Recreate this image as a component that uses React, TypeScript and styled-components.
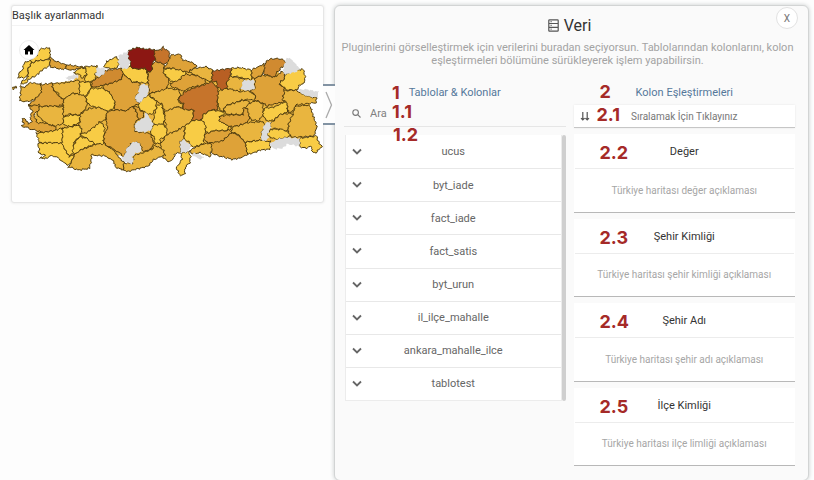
import React from "react";
import styled, { createGlobalStyle } from "styled-components";

const GlobalStyle = createGlobalStyle`
  * { box-sizing: border-box; }
  body {
    margin: 0;
    background: #fdfdfd;
    font-family: Roboto, "Liberation Sans", sans-serif;
    color: #333;
  }
  button, input { font: inherit; color: inherit; }
`;

const Page = styled.main`
  display: grid;
  grid-template-columns: 313fr 475fr;
  gap: 10px;
  align-items: start;
  padding: 5px 5px 1px 11px;
`;

const MapCard = styled.section`
  background: #fff;
  border: 1px solid #e6e6e6;
  border-radius: 3px;
  box-shadow: 0 0 3px #e4e4e4;
`;

const MapTitle = styled.h2`
  margin: 0;
  height: 20px;
  line-height: 20px;
  font-size: 11px;
  font-weight: 400;
  color: #333;
  border-bottom: 1px solid #f3f3f3;
`;

const MapArea = styled.div`
  position: relative;
  svg.map { display: block; width: 100%; height: auto; }
`;

const HomeButton = styled.button`
  position: absolute;
  left: 7px;
  top: 14px;
  width: 20px;
  height: 20px;
  padding: 0;
  display: grid;
  place-items: center;
  border: 1px solid #eee;
  border-radius: 50%;
  background: #fff;
`;

const Panel = styled.section`
  position: relative;
  padding: 10px 13px 14px 9px;
  background: #fafafa;
  border: 1px solid #d2d4d4;
  border-radius: 6px;
  box-shadow: 0 0 4px #c8cccc;
`;

const Handle = styled.button`
  position: absolute;
  left: -12px;
  top: 78px;
  width: 12px;
  height: 41px;
  padding: 0;
  display: grid;
  place-items: center;
  background: #fdfdfd;
  border: 0;
  border-top: 2px solid #8293a3;
  border-bottom: 2px solid #8293a3;
`;

const CloseButton = styled.button`
  position: absolute;
  right: 10px;
  top: 1px;
  width: 22px;
  height: 22px;
  padding: 0;
  border: 1px solid #e2e2e2;
  border-radius: 50%;
  background: #fff;
  font-size: 10px;
  color: #777;
`;

const PanelTitle = styled.h1`
  display: flex;
  justify-content: center;
  align-items: center;
  gap: 5px;
  margin: 0;
  height: 18px;
  font-size: 16px;
  font-weight: 400;
  color: #333;
`;

const Intro = styled.p`
  margin: 7px -8px 17px;
  padding: 0 8px 0 4px;
  font-size: 11px;
  line-height: 13px;
  text-align: center;
  color: #a3a3a3;
`;

const Columns = styled.div`
  display: grid;
  grid-template-columns: 1fr 1fr;
  gap: 8px;
  align-items: start;
`;

const Column = styled.div`
  position: relative;
`;

const ColumnTitle = styled.h2`
  margin: 0;
  height: 17px;
  line-height: 18px;
  font-size: 11px;
  font-weight: 400;
  text-align: center;
  color: #55789a;
`;

const Mark = styled.span<{ $x: number; $y: number }>`
  position: absolute;
  left: ${(p) => p.$x}px;
  top: ${(p) => p.$y}px;
  font-family: Inter, Roboto, sans-serif;
  font-size: 18px;
  line-height: 18px;
  font-weight: 700;
  color: #a52a28;
  pointer-events: none;
`;

const Search = styled.label`
  display: flex;
  align-items: center;
  gap: 9px;
  height: 26px;
  padding: 0 8px 0;
  border-bottom: 1px solid #e6e6e6;
`;

const SearchInput = styled.input`
  flex: 1;
  min-width: 0;
  padding: 0;
  border: 0;
  outline: 0;
  background: transparent;
  font-size: 11px;
  &::placeholder { color: #808080; opacity: 1; }
`;

const TableArea = styled.div`
  display: flex;
  margin-top: 8px;
  padding-left: 1px;
`;

const TableList = styled.ul`
  flex: 1;
  display: grid;
  grid-auto-rows: 1fr;
  min-height: 266px;
  margin: 0;
  padding: 0;
  list-style: none;
  background: #fff;
  border: 1px solid #ececec;
  border-top: 0;
`;

const TableItem = styled.li`
  display: grid;
  & + & { border-top: 1px solid #e8e8e8; }
`;

const TableButton = styled.button`
  display: grid;
  grid-template-columns: 16px 1fr 16px;
  align-items: center;
  padding: 0 3px;
  border: 0;
  background: transparent;
  font-size: 11px;
  color: #666;
`;

const ScrollThumb = styled.div`
  width: 4px;
  border-radius: 2px;
  background: #cfcfcf;
`;

const SortButton = styled.button`
  display: grid;
  grid-template-columns: 10px 1fr 10px;
  align-items: center;
  width: 100%;
  height: 23px;
  margin-top: 4px;
  padding: 0 6px;
  border: 0;
  border-bottom: 1px solid #c6c6c6;
  background: #fff;
  box-shadow: 0 0 2px #e6e6e6;
  font-size: 10px;
  color: #777;
`;

const DropList = styled.div`
  display: grid;
  grid-auto-rows: 1fr;
  gap: 6px;
  min-height: 332px;
  margin-top: 6px;
`;

const DropCard = styled.section`
  position: relative;
  display: flex;
  flex-direction: column;
  padding: 0 1px;
  background: #fff;
  border-bottom: 1px solid #b8b8b8;
`;

const DropTitle = styled.h3`
  margin: 0;
  height: 35px;
  line-height: 36px;
  font-size: 11px;
  font-weight: 400;
  text-align: center;
  color: #333;
  border-bottom: 1px solid #ececec;
`;

const DropHint = styled.p`
  flex: 1;
  display: grid;
  place-items: center;
  margin: 0;
  font-size: 10px;
  color: #a6a6a6;
`;

const Y = "#f8cc45";
const A = "#e9b53f";
const O = "#dea238";

const land =
  "240,210 290,210 312,250 365,210 400,190 460,190 500,200 590,220 640,240 700,230 780,230 830,210 870,260 895,275 930,300 930,400 900,420 800,430 740,455 660,465 620,445 570,440 550,445 500,460 460,450 400,480 340,460 240,470 200,470 125,435 115,405 100,370 110,330 110,300 120,255 220,242";

const provinces: [string, string][] = [
  [Y, "118,147 150,143 150,172 140,180 112,182 95,190 90,182 110,165"],
  [Y, "72,188 90,182 95,190 85,205 82,228 70,234 54,232 56,222 68,208"],
  [Y, "95,190 112,182 140,180 152,176 148,196 128,210 105,228 88,238 74,252 62,250 84,230 85,205"],
  [O, "150,172 170,185 200,195 200,206 185,208 150,200"],
  [O, "198,194 255,202 240,205 215,210 198,208"],
  [Y, "218,220 240,205 258,204 260,225 245,235 236,222"],
  [Y, "256,200 290,198 294,212 285,222 288,240 262,247 252,240 260,225"],
  [Y, "312,200 320,185 338,177 350,170 356,180 356,200 345,206 328,205"],
  ["#d08a30", "275,245 300,230 318,212 362,205 372,222 360,240 335,250 310,255 285,262 275,258"],
  [Y, "362,205 390,200 410,208 436,204 442,218 445,250 425,248 395,245 370,222"],
  [O, "456,212 456,190 470,185 492,192 492,222 508,242 500,262 505,270 470,275 448,280 445,250 444,218"],
  ["#8c1713", "384,152 410,143 440,147 466,150 470,175 456,190 456,212 442,218 436,204 410,208 390,200 393,185 384,172"],
  ["#c6742b", "462,160 465,150 485,150 488,138 494,150 508,152 508,172 514,186 495,192 480,188 468,185"],
  [O, "510,172 515,165 542,163 548,180 570,185 590,195 585,205 565,215 540,215 520,205 492,205 500,192"],
  [Y, "490,207 520,205 557,216 556,230 540,240 528,250 510,240 492,222"],
  [A, "565,215 585,205 620,200 638,212 635,245 615,240 595,228"],
  [O, "510,250 540,238 555,222 595,228 618,240 610,255 570,262 550,275 535,265 515,262"],
  [Y, "694,205 720,203 755,210 755,240 735,235 710,230 692,230"],
  [A, "683,230 692,228 732,238 730,255 718,275 695,272 678,265"],
  ["#b85f23", "638,213 694,205 690,230 680,250 683,265 668,270 652,262 650,245 635,243"],
  [O, "755,210 790,192 798,205 785,225 765,235 755,235"],
  [O, "765,235 785,225 810,228 822,232 845,215 855,225 850,240 838,252 850,262 855,275 848,290 852,305 825,312 800,318 780,305 765,302 765,285 750,272 764,268"],
  ["#d08a30", "794,190 810,177 835,176 855,180 858,195 840,205 830,220 822,232 810,228 792,222"],
  [Y, "855,225 880,212 910,208 916,235 910,252 900,255 890,270 865,270 850,262 838,250 850,240"],
  [A, "853,272 890,270 905,282 930,290 950,294 948,308 915,312 888,315 880,330 866,340 860,310 848,300"],
  [A, "446,282 470,275 505,264 535,270 542,285 532,300 550,315 548,325 530,320 496,340 485,312 470,305"],
  [A, "495,335 530,320 550,325 582,332 577,360 555,380 530,392 502,408 495,395 500,375 490,362"],
  [A, "652,275 680,265 720,275 745,272 765,285 765,302 745,298 725,300 705,308 680,315 670,335 658,325 652,300"],
  [A, "675,318 705,308 730,300 750,305 745,320 730,330 730,345 705,343 680,342 670,332"],
  [A, "748,310 765,302 788,310 790,345 775,362 755,360 742,340 730,330"],
  ["#c6742b", "542,290 550,278 580,265 610,256 635,246 652,262 655,275 652,300 652,328 630,330 610,345 608,358 592,362 577,360 582,330 550,328 550,312 535,300"],
  [Y, "792,325 820,322 850,307 862,310 862,335 840,345 820,362 798,362 788,345"],
  [A, "810,370 825,358 842,342 875,340 882,345 866,370 865,395 850,392 830,385 810,388"],
  [A, "885,320 915,315 932,320 940,350 950,380 942,408 910,410 880,412 864,405 866,370 880,340"],
  [O, "658,350 680,345 730,345 730,325 742,325 748,355 742,368 712,378 692,380 670,375 655,362"],
  [A, "692,380 712,378 742,368 790,365 796,375 785,398 785,420 735,427 722,415 715,402 695,398"],
  [Y, "605,362 610,345 630,330 670,335 675,342 658,350 658,362 688,380 680,392 640,392 630,400 615,395"],
  [Y, "800,400 815,388 850,388 872,405 860,412 830,418 810,412"],
  [Y, "898,415 950,408 954,425 967,442 955,450 948,458 935,452 935,438 920,445 900,440"],
  [Y, "732,428 785,420 810,425 810,448 780,450 760,458 742,463"],
  [O, "612,405 640,392 680,392 695,385 695,398 670,422 650,430 625,428 610,420"],
  [O, "630,430 670,422 692,398 715,405 725,418 736,428 742,463 720,475 695,478 665,470 640,462 630,445"],
  [A, "565,455 590,440 612,432 632,430 636,445 630,470 600,458 580,462"],
  [A, "482,432 502,402 530,392 555,378 552,415 540,425 542,458 525,462 520,478 510,485 490,475 485,460"],
  [Y, "556,378 575,362 592,360 605,362 618,375 615,400 610,430 588,440 575,440 565,425 552,415"],
  [Y, "542,460 565,455 572,472 568,490 556,502 554,520 542,528 535,515 528,500 540,490 546,478"],
  [O, "335,250 360,240 372,222 395,245 420,250 418,275 405,295 418,310 400,320 380,332 345,330 342,305 330,280 310,265 312,255"],
  [O, "320,335 345,330 380,332 400,318 410,335 415,358 403,372 405,395 438,398 452,402 462,430 455,445 430,455 420,430 405,428 392,432 380,450 372,470 345,450 312,430 312,405 322,385 318,360"],
  [O, "400,318 418,325 432,340 428,355 415,358 410,335"],
  [Y, "415,310 444,284 470,305 468,325 455,345 430,335 418,325"],
  [Y, "470,318 485,312 490,335 496,352 490,372 470,378 458,370 464,345"],
  [Y, "455,385 462,375 490,372 502,390 498,410 480,418 482,430 465,432 462,410 452,400"],
  [A, "370,490 398,490 402,465 430,458 455,448 465,435 490,450 495,465 480,470 462,480 440,500 405,508 378,515 370,505"],
  [A, "205,500 215,485 225,462 240,450 270,440 290,432 312,430 345,455 362,478 372,490 368,512 345,498 340,482 315,468 275,465 272,490 268,505 235,510"],
  [Y, "258,290 275,265 310,265 330,280 345,305 342,325 320,335 300,325 278,320 262,310"],
  [Y, "238,245 270,247 275,262 255,290 235,285"],
  [A, "155,250 180,250 215,245 238,240 238,282 215,280 205,292 190,298 180,290 175,278 160,272"],
  [O, "123,255 155,250 160,272 180,290 190,300 188,315 165,320 140,318 120,322 85,315 100,302 110,292"],
  [A, "62,258 75,262 90,248 122,252 125,275 108,295 85,305 58,302 62,285"],
  [O, "85,318 118,314 118,330 100,345 112,368 140,370 168,382 165,392 130,398 95,388 80,382 66,378 72,372 66,356 78,358 86,372 96,365 90,350 98,335"],
  [A, "118,320 165,318 190,322 195,350 188,372 165,378 140,370 110,345"],
  [A, "190,300 215,280 238,282 257,290 262,318 240,345 205,342 190,350 190,322"],
  [Y, "190,352 210,345 240,346 238,368 215,380 190,375"],
  [A, "240,345 265,325 300,322 322,335 315,360 300,368 280,385 262,400 240,402 235,380 240,365"],
  [Y, "188,385 215,380 235,375 245,388 240,410 220,428 225,455 208,470 195,450 184,440"],
  [Y, "108,400 165,392 188,383 186,430 150,428 118,428"],
  [Y, "112,430 150,428 185,430 195,450 210,470 225,462 212,490 200,495 180,478 155,465 140,475 118,475 138,466 115,460 118,445"],
  [Y, "222,430 240,410 262,416 288,432 270,438 240,450 225,462 218,455"],
  [Y, "240,402 262,398 282,380 300,367 314,380 310,432 288,432 262,418"],
  [A, "34,262 44,260 50,263 42,267 35,266"],
];

const emptyProvinces = [
  "290,205 312,203 316,215 302,230 286,228",
  "358,165 385,153 384,175 393,185 380,207 362,205 354,185",
  "418,258 435,250 446,262 444,282 430,298 418,310 404,295 415,278",
  "405,370 430,355 438,335 448,350 460,372 455,388 435,398 405,392",
  "362,475 375,465 380,445 400,425 420,430 426,455 405,460 396,470 402,485 395,492 375,485",
  "730,240 762,240 764,268 742,272 723,268",
  "858,178 870,172 882,188 900,205 892,215 865,222 850,222 850,205",
  "895,268 920,268 955,275 954,292 930,290 905,282",
  "796,368 812,366 812,385 802,402 806,415 792,425 784,418 785,395",
  "810,430 830,418 860,412 900,415 898,440 865,432 845,445 825,447 812,442",
  "540,425 552,418 572,435 565,455 542,458",
  "575,465 585,458 612,470 600,478 588,472",
  "198,232 215,226 236,224 232,234 205,240",
];

// Splits each edge into short pieces and bends them with one shared field,
// so neighbouring provinces get the same uneven border.
function roughen(points: string): string {
  const list = points.split(" ").map((p) => p.split(",").map(Number));
  const out: string[] = [];
  list.forEach(([x, y], i) => {
    const [nx, ny] = list[(i + 1) % list.length];
    const steps = Math.max(1, Math.round(Math.hypot(nx - x, ny - y) / 4));
    for (let s = 0; s < steps; s++) {
      const px = x + ((nx - x) * s) / steps;
      const py = y + ((ny - y) * s) / steps;
      const dx = 1.7 * Math.sin(py * 0.42 + px * 0.13) + 1.2 * Math.sin(py * 0.83 - px * 0.31);
      const dy = 1.7 * Math.sin(px * 0.39 - py * 0.17) + 1.2 * Math.sin(px * 0.77 + py * 0.29);
      out.push(`${(px + dx).toFixed(1)},${(py + dy).toFixed(1)}`);
    }
  });
  return out.join(" ");
}

function TurkeyMap() {
  return (
    <svg className="map" viewBox="36 78 933 528" role="img" aria-label="Türkiye haritası">
      <polygon points={land} fill={A} />
      <g stroke="#4f3c10" strokeWidth="3" strokeLinejoin="round">
        {provinces.map(([fill, points]) => (
          <polygon key={points} points={roughen(points)} fill={fill} />
        ))}
      </g>
      <g fill="#dcdcdc">
        {emptyProvinces.map((points) => (
          <polygon key={points} points={roughen(points)} />
        ))}
      </g>
    </svg>
  );
}

const tables = ["ucus", "byt_iade", "fact_iade", "fact_satis", "byt_urun", "il_ilçe_mahalle", "ankara_mahalle_ilce", "tablotest"];

const fields = [
  ["2.2", "Değer", "Türkiye haritası değer açıklaması"],
  ["2.3", "Şehir Kimliği", "Türkiye haritası şehir kimliği açıklaması"],
  ["2.4", "Şehir Adı", "Türkiye haritası şehir adı açıklaması"],
  ["2.5", "İlçe Kimliği", "Türkiye haritası ilçe limliği açıklaması"],
];

export default function App() {
  return (
    <>
      <GlobalStyle />
      <Page>
        <MapCard>
          <MapTitle>Başlık ayarlanmadı</MapTitle>
          <MapArea>
            <TurkeyMap />
            <HomeButton aria-label="Ana görünüm">
              <svg width="12" height="12" viewBox="0 0 24 24">
                <path d="M10 21v-6h4v6h6v-9h3L12 2 1 12h3v9z" fill="#000" />
              </svg>
            </HomeButton>
          </MapArea>
        </MapCard>

        <Panel>
          <Handle aria-label="Paneli daralt">
            <svg width="8" height="28" viewBox="0 0 8 28" fill="none" stroke="#aaa" strokeWidth="1.3">
              <path d="M1 1l5.5 13L1 27" />
            </svg>
          </Handle>
          <CloseButton aria-label="Kapat">X</CloseButton>
          <PanelTitle>
            <svg width="11" height="13" viewBox="0 0 11 13" fill="none" stroke="#555" strokeWidth="1.2">
              <rect x="0.8" y="0.8" width="9.4" height="11.4" rx="0.8" />
              <path d="M1 4.5h9M1 8.3h9M2.6 2.7h1M2.6 6.4h1M2.6 10.2h1" />
            </svg>
            Veri
          </PanelTitle>
          <Intro>
            Pluginlerini görselleştirmek için verilerini buradan seçiyorsun. Tablolarından kolonlarını, kolon
            eşleştirmeleri bölümüne sürükleyerek işlem yapabilirsin.
          </Intro>

          <Columns>
            <Column>
              <ColumnTitle>Tablolar &amp; Kolonlar</ColumnTitle>
              <Search>
                <svg width="9" height="9" viewBox="0 0 9 9" fill="none" stroke="#777" strokeWidth="1.1">
                  <circle cx="3.6" cy="3.6" r="2.8" />
                  <path d="M5.7 5.7l2.8 2.8" />
                </svg>
                <SearchInput placeholder="Ara" aria-label="Ara" />
              </Search>
              <TableArea>
                <TableList>
                  {tables.map((name) => (
                    <TableItem key={name}>
                      <TableButton aria-expanded={false}>
                        <svg width="16" height="8" viewBox="0 0 16 8" fill="none" stroke="#666" strokeWidth="1.8">
                          <path d="M4 1.5l4 4 4-4" />
                        </svg>
                        {name}
                      </TableButton>
                    </TableItem>
                  ))}
                </TableList>
                <ScrollThumb />
              </TableArea>
              <Mark $x={48} $y={0}>1</Mark>
              <Mark $x={48} $y={19}>1.1</Mark>
              <Mark $x={49} $y={42}>1.2</Mark>
            </Column>

            <Column>
              <ColumnTitle>Kolon Eşleştirmeleri</ColumnTitle>
              <SortButton>
                <svg width="10" height="10" viewBox="0 0 10 10" fill="none" stroke="#555" strokeWidth="1.2">
                  <path d="M2.8 1v8M1 7.2L2.8 9l1.8-1.8M7.2 1v8M5.4 7.2L7.2 9 9 7.2" />
                </svg>
                Sıralamak İçin Tıklayınız
              </SortButton>
              <DropList>
                {fields.map(([mark, title, hint]) => (
                  <DropCard key={mark}>
                    <DropTitle>{title}</DropTitle>
                    <DropHint>{hint}</DropHint>
                    <Mark $x={26} $y={10}>{mark}</Mark>
                  </DropCard>
                ))}
              </DropList>
              <Mark $x={26} $y={-1}>2</Mark>
              <Mark $x={23} $y={22}>2.1</Mark>
            </Column>
          </Columns>
        </Panel>
      </Page>
    </>
  );
}
